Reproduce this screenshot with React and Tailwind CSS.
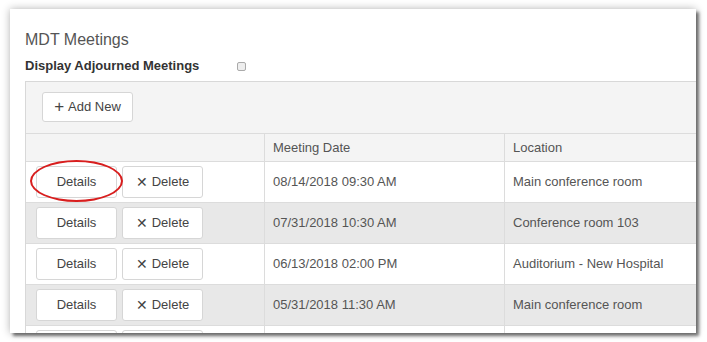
import React from "react";

const meetings = [
  { id: 1, date: "08/14/2018 09:30 AM", location: "Main conference room" },
  { id: 2, date: "07/31/2018 10:30 AM", location: "Conference room 103" },
  { id: 3, date: "06/13/2018 02:00 PM", location: "Auditorium - New Hospital" },
  { id: 4, date: "05/31/2018 11:30 AM", location: "Main conference room" },
  { id: 5, date: "", location: "", partial: true },
];

const btn =
  "h-[32px] w-[81px] bg-white border border-[#d6d6d6] rounded-[3px] text-[13px] text-[#444] flex items-center justify-center";

const App = () => {
  return (
    <div
      className="w-[707px] h-[342px] bg-white overflow-hidden pt-[9px] pl-[10px]"
      style={{ fontFamily: '"Liberation Sans", Arial, sans-serif' }}
    >
      <div className="w-[686px] h-[324px] bg-white overflow-hidden shadow-[3px_3px_3px_rgba(0,0,0,0.5),0_0_8px_rgba(0,0,0,0.3)]">
        <div className="pl-[15px] pt-[21px]">
          <h1 className="text-[16px] leading-[20px] text-[#555]">MDT Meetings</h1>
          <div className="flex items-center mt-[7px] h-[18px]">
            <span className="text-[13px] font-bold text-[#333] w-[212px]">Display Adjourned Meetings</span>
            <span className="w-[9px] h-[9px] border border-[#aaa] rounded-[2px] bg-[#eee]" />
          </div>

          {/* table panel */}
          <div className="mt-[6px] w-[720px] border border-[#d8d8d8]">
            <div className="h-[52px] bg-[#f4f4f4] pl-[16px] pt-[10px] border-b border-[#dcdcdc]">
              <button className="h-[30px] w-[91px] bg-white border border-[#d6d6d6] rounded-[3px] text-[13px] text-[#444] flex items-center justify-center gap-[4px]">
                <span className="text-[17px] leading-none -mt-[2px]">+</span>
                <span>Add New</span>
              </button>
            </div>

            <div className="flex h-[28px] bg-[#f4f4f4] border-b border-[#dcdcdc] text-[13px] text-[#555]">
              <div className="w-[239px] border-r border-[#dcdcdc]" />
              <div className="w-[240px] border-r border-[#dcdcdc] pl-[8px] flex items-center">Meeting Date</div>
              <div className="flex-1 pl-[8px] flex items-center">Location</div>
            </div>

            {meetings.map((m, i) => (
              <div
                key={m.id}
                className={
                  "flex h-[41px] border-b border-[#dcdcdc] text-[13px] text-[#555] " +
                  (i % 2 === 1 ? "bg-[#e8e8e8]" : "bg-white")
                }
              >
                <div className="w-[239px] border-r border-[#dcdcdc] flex items-center pl-[10px] gap-[5px]">
                  <div className="relative">
                    <button className={btn}>{!m.partial && "Details"}</button>
                    {i === 0 && (
                      <span className="absolute left-[-6px] top-[-6px] w-[93px] h-[42px] rounded-[50%] border-2 border-[#d81e1e]" />
                    )}
                  </div>
                  <button className={btn + " gap-[4px]"}>
                    {!m.partial && (
                      <>
                        <span className="text-[14px] leading-none">✕</span>
                        <span>Delete</span>
                      </>
                    )}
                  </button>
                </div>
                <div className="w-[240px] border-r border-[#dcdcdc] pl-[8px] flex items-center">{m.date}</div>
                <div className="flex-1 pl-[8px] flex items-center">{m.location}</div>
              </div>
            ))}
          </div>
        </div>
      </div>
    </div>
  );
};

export default App;
